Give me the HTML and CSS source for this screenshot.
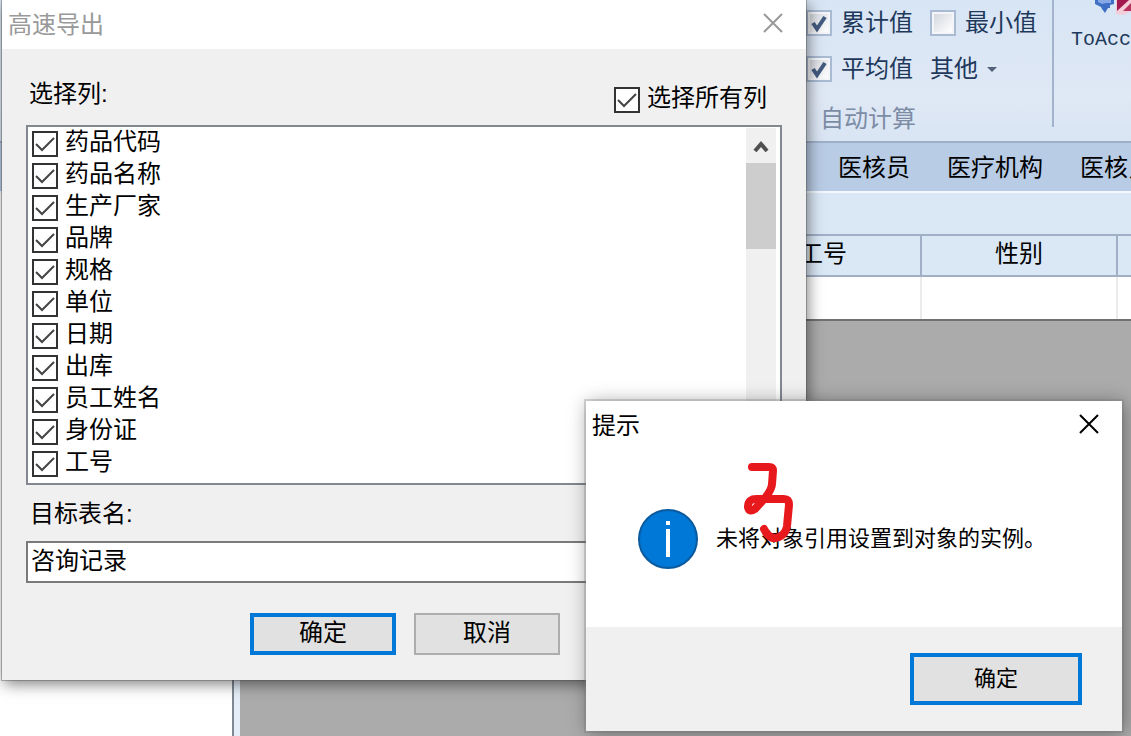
FILE: index.html
```html
<!DOCTYPE html>
<html lang="zh-CN">
<head>
  <meta charset="UTF-8">
  <title>高速导出</title>
  <link rel="stylesheet" href="styles.css">
</head>
<body>
  <div class="app">
    <div class="ribbon">
      <div class="group">
        <div class="calc">
          <label><input type="checkbox" class="soft" checked>累计值</label>
          <label><input type="checkbox" class="soft">最小值</label>
          <label><input type="checkbox" class="soft" checked>平均值</label>
          <button class="more">其他<span class="caret"></span></button>
        </div>
        <div class="caption">自动计算</div>
      </div>
      <button class="export">
        <svg width="38" height="16" viewBox="0 0 38 16" aria-hidden="true">
          <path d="M2 0h19v4l-4 1v3h-2l-3 5-3-4-1-2-6-3z" fill="#3f6fc4"/>
          <path d="M5 0h13v3h-5l-4 1-4-2z" fill="#86a8e4"/>
          <path d="M23 0h15v11l-7 4-8-1z" fill="#f3ced8"/>
          <path d="M24 0h12L24 11z" fill="#a3194f"/>
          <path d="M30 11l8-8v8z" fill="#b93360"/>
        </svg>
        <span>ToAcc</span>
      </button>
    </div>
    <nav class="tabs">
      <div class="tab-list">
        <a href="#">医核员</a>
        <a href="#">医疗机构</a>
        <a href="#">医核员</a>
      </div>
    </nav>
    <div class="work">
      <div class="side"></div>
      <div class="main">
        <table>
          <colgroup><col><col class="field"><col class="field"><col class="edge"></colgroup>
          <thead><tr><th></th><th>工号</th><th>性别</th><th></th></tr></thead>
          <tbody><tr><td></td><td></td><td></td><td></td></tr></tbody>
        </table>
      </div>
    </div>
  </div>

  <div class="window export-window" role="dialog" aria-labelledby="exportTitle">
    <div class="titlebar">
      <span id="exportTitle">高速导出</span>
      <button class="close" aria-label="关闭"><svg width="20" height="20" viewBox="0 0 20 20"><path d="M1 1l18 18M19 1L1 19"/></svg></button>
    </div>
    <div class="content">
      <div class="list-head">
        <span>选择列:</span>
        <label class="check"><input type="checkbox" checked><span>选择所有列</span></label>
      </div>
      <div class="list">
        <div class="items">
          <label class="check"><input type="checkbox" checked><span>药品代码</span></label>
          <label class="check"><input type="checkbox" checked><span>药品名称</span></label>
          <label class="check"><input type="checkbox" checked><span>生产厂家</span></label>
          <label class="check"><input type="checkbox" checked><span>品牌</span></label>
          <label class="check"><input type="checkbox" checked><span>规格</span></label>
          <label class="check"><input type="checkbox" checked><span>单位</span></label>
          <label class="check"><input type="checkbox" checked><span>日期</span></label>
          <label class="check"><input type="checkbox" checked><span>出库</span></label>
          <label class="check"><input type="checkbox" checked><span>员工姓名</span></label>
          <label class="check"><input type="checkbox" checked><span>身份证</span></label>
          <label class="check"><input type="checkbox" checked><span>工号</span></label>
        </div>
        <div class="scrollbar">
          <button class="up" aria-label="向上滚动"><svg width="16" height="14" viewBox="0 0 16 14"><path d="M2 12l6-7 6 7"/></svg></button>
          <div class="thumb"></div>
        </div>
      </div>
      <label class="name-label" for="tableName">目标表名:</label>
      <input type="text" id="tableName" value="咨询记录">
      <div class="actions">
        <button class="btn primary">确定</button>
        <button class="btn">取消</button>
      </div>
    </div>
  </div>

  <div class="window alert-window" role="alertdialog" aria-labelledby="alertTitle">
    <div class="titlebar">
      <span id="alertTitle">提示</span>
      <button class="close" aria-label="关闭"><svg width="20" height="20" viewBox="0 0 20 20"><path d="M1 1l18 18M19 1L1 19"/></svg></button>
    </div>
    <div class="message">
      <svg width="60" height="60" viewBox="0 0 60 60" aria-hidden="true">
        <circle cx="30" cy="30" r="29" fill="#0078d7" stroke="#0a5a9e" stroke-width="2"/>
        <path d="M28 12h4v4h-4zM28 20h4v28h-4z" fill="#fff"/>
      </svg>
      <p>未将对象引用设置到对象的实例。</p>
    </div>
    <div class="footer">
      <button class="btn primary">确定</button>
    </div>
    <svg class="mark" width="56" height="88" viewBox="0 0 56 88" aria-hidden="true">
      <path d="M12 7h17q4 0 4 4l-1 13q0 5-7 14L15 49q-6 4-7-2 0-9 10-8h26q5 0 5 6l-2 21q-1 8-8 11-9 4-15-8"/>
    </svg>
  </div>
</body>
</html>
```
FILE: styles.css
```css
* {
  box-sizing: border-box;
}

body {
  margin: 0;
  height: 100vh;
  overflow: hidden;
  font-family: "Liberation Sans", "Noto Sans CJK SC", sans-serif;
  font-size: 24px;
  line-height: 28px;
  color: #000;
}

button,
input {
  margin: 0;
  padding: 0;
  font: inherit;
  color: inherit;
}

button {
  border: none;
  background: none;
}

/* main program */
.app {
  height: 100vh;
  display: flex;
  flex-direction: column;
}

.ribbon {
  display: flex;
  justify-content: flex-end;
  height: 143px;
  border-bottom: 2px solid #a0afc8;
  background: linear-gradient(#d8e5f4, #dfe8f5 70%, #d9e5f3);
  color: #1e395b;
  overflow: hidden;
}

.group {
  width: 248px;
  height: 127px;
  border-right: 2px solid #a3b3ce;
  white-space: nowrap;
}

.calc {
  display: grid;
  grid-template-columns: 124px 1fr;
  grid-auto-rows: 46px;
}

.calc label,
.more {
  display: flex;
  align-items: center;
  gap: 9px;
}

.soft {
  appearance: none;
  width: 26px;
  height: 26px;
  border: 2px solid #a9bad3;
  background: linear-gradient(135deg, #d3d7de, #fff) center / 18px 18px no-repeat #f3f5f8;
}

.soft:checked {
  background: url("data:image/svg+xml,%3Csvg xmlns='http://www.w3.org/2000/svg' viewBox='0 0 22 22'%3E%3Cpath d='M5 11l4 6 8-12' fill='none' stroke='%23435b80' stroke-width='4'/%3E%3C/svg%3E") center no-repeat, linear-gradient(135deg, #d3d7de, #fff) center / 18px 18px no-repeat #f3f5f8;
}

.caret {
  border: 5px solid transparent;
  border-top-color: #53627a;
  border-bottom: none;
}

.caption {
  padding: 13px 14px;
  color: #7c8ca5;
}

.export {
  width: 77px;
  display: flex;
  flex-direction: column;
  align-items: flex-end;
  gap: 10px;
  font-family: "Liberation Mono", monospace;
  font-size: 20px;
}

.tabs {
  height: 50px;
  border-bottom: 2px solid #f2f8fd;
  background: #b9cce5;
}

.tab-list {
  width: 293px;
  margin-left: auto;
  display: flex;
  gap: 37px;
  padding: 11px 0 9px;
  overflow: hidden;
  white-space: nowrap;
}

.tab-list a {
  color: #000;
  text-decoration: none;
}

.work {
  flex: 1;
  display: flex;
}

.side {
  width: 240px;
  border-right: 6px solid #e5eef8;
  background: linear-gradient(90deg, #fff 232px, #7f8794 232px);
}

.main {
  flex: 1;
  padding-top: 41px;
  background: linear-gradient(#dae7f5 41px, #ababab 41px);
}

table {
  width: 100%;
  table-layout: fixed;
  border-collapse: separate;
  border-spacing: 0;
  background: #fff;
  border-bottom: 2px solid #707070;
}

.field {
  width: 196px;
}

.edge {
  width: 13px;
}

th,
td {
  height: 42px;
  padding: 0;
  border-right: 2px solid #ebebeb;
}

th {
  height: 43px;
  padding-bottom: 3px;
  border: solid #a0aec6;
  border-width: 2px 2px 2px 0;
  background: #dae7f5;
  font-weight: normal;
}

th:last-child,
td:last-child {
  border-right: none;
}

/* windows */
.window {
  position: absolute;
  display: flex;
  flex-direction: column;
  background: #f0f0f0;
}

.export-window {
  left: 2px;
  top: 0;
  width: 804px;
  box-shadow: 0 0 0 1px rgba(80, 80, 80, 0.4), 2px 4px 14px rgba(0, 0, 0, 0.5);
}

.alert-window {
  left: 586px;
  top: 401px;
  width: 536px;
  font-size: 22px;
  box-shadow: 0 0 0 2px rgba(120, 120, 120, 0.3), 2px 2px 18px rgba(0, 0, 0, 0.4);
}

.titlebar {
  display: flex;
  align-items: center;
  justify-content: space-between;
  height: 49px;
  padding: 0 23px 0 6px;
  background: #fff;
  font-size: 24px;
}

.export-window .titlebar {
  color: #999;
}

.close {
  display: flex;
  padding-bottom: 4px;
}

.close svg,
.up svg {
  fill: none;
  stroke: currentColor;
  stroke-width: 2;
}

.content {
  display: flex;
  flex-direction: column;
  padding: 0 24px 25px;
}

.list-head {
  display: flex;
  justify-content: space-between;
  padding: 31px 15px 0 3px;
  height: 76px;
}

.check {
  display: flex;
  gap: 7px;
  height: 32px;
}

.check input {
  appearance: none;
  width: 26px;
  height: 26px;
  margin-top: 3px;
  border: 2px solid #333;
  background: url("data:image/svg+xml,%3Csvg xmlns='http://www.w3.org/2000/svg' viewBox='0 0 22 22'%3E%3Cpath d='M2 11l6 6L20 5' fill='none' stroke='%23444' stroke-width='2'/%3E%3C/svg%3E") center no-repeat #fff;
}

.list-head .check {
  padding-top: 4px;
}

.list {
  display: flex;
  justify-content: space-between;
  height: 360px;
  padding: 1px 4px 2px;
  border: 2px solid #828790;
  background: #fff;
}

.scrollbar {
  width: 30px;
  padding-top: 1px;
  background: #f0f0f0;
}

.up {
  display: flex;
  align-items: center;
  justify-content: center;
  width: 100%;
  height: 34px;
  color: #505050;
}

.up svg {
  stroke-width: 4;
}

.thumb {
  height: 86px;
  background: #cdcdcd;
}

.name-label {
  padding: 15px 4px 13px;
}

#tableName {
  width: 100%;
  height: 42px;
  padding: 0 3px 8px;
  border: 2px solid #7a7a7a;
  background: #fff;
}

.actions {
  display: flex;
  justify-content: center;
  gap: 18px;
  padding: 30px 0 0 2px;
}

.btn {
  width: 146px;
  height: 42px;
  border: 2px solid #adadad;
  background: #e1e1e1;
}

.btn.primary {
  border: 4px solid #0078d7;
}

.actions .btn {
  padding-bottom: 3px;
}

.message {
  display: flex;
  align-items: center;
  gap: 18px;
  height: 177px;
  padding: 0 52px;
  background: #fff;
}

.message p {
  margin: 0;
  white-space: nowrap;
}

.footer {
  display: flex;
  justify-content: flex-end;
  padding: 26px 40px;
}

.footer .btn {
  width: 172px;
  height: 52px;
}

/* handwritten number over the message */
.mark {
  position: absolute;
  left: 154px;
  top: 59px;
  fill: none;
  stroke: #e8191c;
  stroke-width: 8;
  stroke-linecap: round;
  stroke-linejoin: round;
}
```
